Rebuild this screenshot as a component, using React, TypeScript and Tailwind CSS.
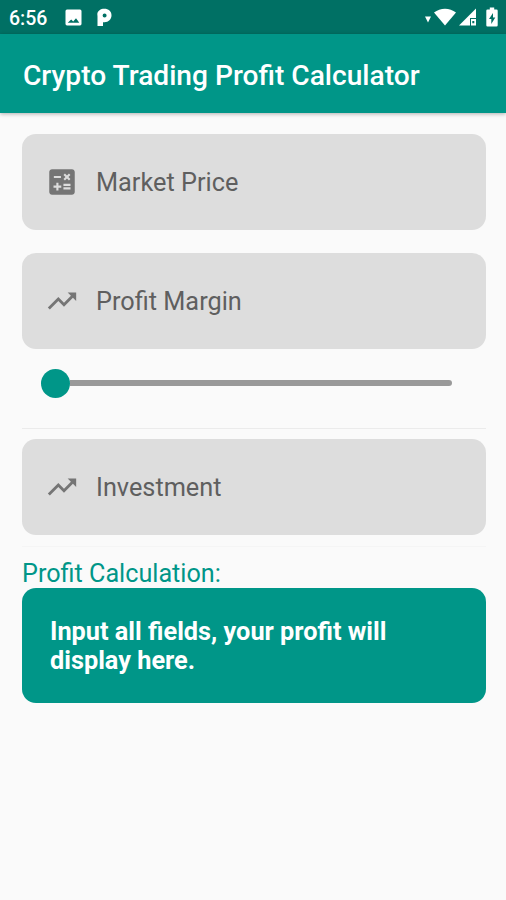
import type { ReactNode } from "react";
import { MdCalculate, MdTrendingUp } from "react-icons/md";

function StatusBar() {
  return (
    <div className="flex h-[34px] items-center bg-[#007064] text-white">
      <span className="ml-[9px] mt-[3px] w-[55px] text-[19.5px] leading-none font-medium">
        6:56
      </span>
      <svg width="17" height="17" viewBox="0 0 17 17" className="ml-px">
        <path
          fill="currentColor"
          fillRule="evenodd"
          d="M2 .5h13A1.6 1.6 0 0 1 16.5 2v13a1.6 1.6 0 0 1-1.5 1.5H2A1.6 1.6 0 0 1 .5 15V2A1.6 1.6 0 0 1 2 .5ZM2.7 13.8h11.6l-3.3-4.6-2.8 3.4-2-2Z"
        />
      </svg>
      <svg width="15" height="19" viewBox="0 0 15 19" className="ml-[15px]">
        <path
          fill="currentColor"
          fillRule="evenodd"
          d="M.3 6C.8 2.800 3.500.8 7.300.8c4.200 0 7.200 2.600 7.200 6.500 0 4.200-3 6.900-7 6.900H6V18H.5V8.500ZM7.600 5.400a2 2 0 1 0 0 4 2 2 0 0 0 0-4Z"
        />
      </svg>
      <div className="ml-auto mr-[8px] flex items-center">
        <svg width="6" height="7" viewBox="0 0 6 7" className="mt-[5px]">
          <path fill="currentColor" d="M0 .5h6L3 6.5Z" />
        </svg>
        <svg width="22" height="18" viewBox="0 0 22 18" className="ml-[3px]">
          <path fill="currentColor" d="M0 4.5C6.3-.6 15.7-.6 22 4.5L11 17.5Z" />
        </svg>
        <svg width="18" height="18" viewBox="0 0 18 18" className="ml-[3px]">
          <path
            fill="currentColor"
            fillRule="evenodd"
            d="M17 .5v17H0ZM11 10v7.500h1V11h5v-1ZM13.300 13v2.300h2V13Z"
          />
        </svg>
        <svg width="12" height="20" viewBox="0 0 12 20" className="ml-[9px]">
          <path
            fill="currentColor"
            fillRule="evenodd"
            d="M3.8.5h4.4v2H10.500a1.200 1.200 0 0 1 1.200 1.200v14.600a1.200 1.200 0 0 1-1.200 1.200h-9A1.200 1.200 0 0 1 .3 18.300V3.700a1.200 1.200 0 0 1 1.200-1.200H3.800ZM7 6l-4 6h2.300v5l4-6.500H7Z"
          />
        </svg>
      </div>
    </div>
  );
}

function Field({ icon, label }: { icon: ReactNode; label: string }) {
  return (
    <div className="flex h-24 items-center rounded-[14px] bg-[#dddddd] pl-[23px] text-[#757575]">
      {icon}
      <span className="mt-[2px] ml-[17px] text-[25.3px] text-[#5f5f5f]">{label}</span>
    </div>
  );
}

export default function App() {
  return (
    <div className="min-h-[900px] w-full bg-[#fafafa] font-[Roboto,sans-serif]">
      <StatusBar />
      <header className="flex h-[79px] items-center bg-[#009688] pl-[23px] pt-[5px] text-[28.15px] font-medium whitespace-nowrap text-white shadow-[0_1px_4px_rgba(0,0,0,0.3)]">
        Crypto Trading Profit Calculator
      </header>
      <main className="pt-[21px] pr-[20px] pl-[22px]">
        <Field icon={<MdCalculate size={34} />} label="Market Price" />
        <div className="mt-[23px]">
          <Field icon={<MdTrendingUp size={34} />} label="Profit Margin" />
        </div>
        <div className="mt-[19.5px] ml-[19px] flex h-[29px] items-center">
          <div className="size-[29px] rounded-full bg-[#009688]" />
          <div className="h-[5.5px] w-[382px] rounded-r-full bg-[#999999]" />
        </div>
        <div className="mt-[30.5px] h-px bg-[#ebebeb]" />
        <div className="mt-[10px]">
          <Field icon={<MdTrendingUp size={34} />} label="Investment" />
        </div>
        <div className="mt-[11px] h-px bg-[#f5f5f5]" />
        <p className="mt-[12px] h-[29px] text-[25.2px] leading-[29px] text-[#009688]">
          Profit Calculation:
        </p>
        <div className="h-[114.5px] rounded-[14px] bg-[#009688] pt-[29px] pl-[28px] text-[25.3px] leading-[29.3px] font-bold text-white">
          Input all fields, your profit will
          <br />
          display here.
        </div>
      </main>
    </div>
  );
}
